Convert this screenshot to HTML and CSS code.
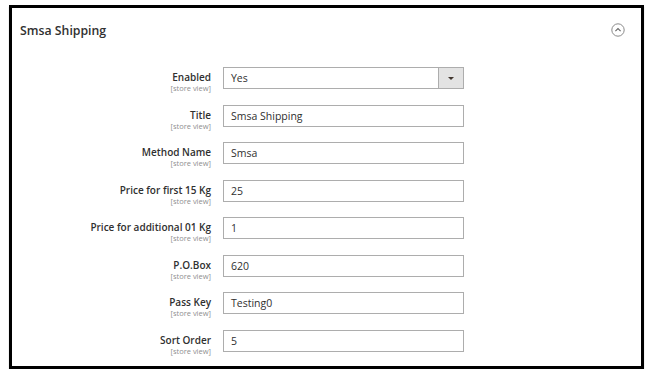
FILE: index.html
```html
<!DOCTYPE html>
<html lang="en">
<head>
  <meta charset="UTF-8" />
  <title>Smsa Shipping</title>
  <link rel="stylesheet" href="styles.css">
</head>
<body>
  <div class="section">
    <div class="section-head">
      <span class="section-title">Smsa Shipping</span>
      <span class="toggle">
        <svg width="14" height="14" viewBox="0 0 14 14">
          <circle cx="7" cy="7" r="6.2" fill="none" stroke="#8a8a8a" stroke-width="1"/>
          <path d="M4.4 8.2 L7 5.6 L9.6 8.2" fill="none" stroke="#666" stroke-width="1.1"/>
        </svg>
      </span>
    </div>

    <div class="form">
      <div class="field">
        <div class="label">Enabled<span class="scope">[store view]</span></div>
        <div class="control select">
          <span>Yes</span>
          <span class="select-btn"><span class="caret"></span></span>
        </div>
      </div>
      <div class="field">
        <div class="label">Title<span class="scope">[store view]</span></div>
        <div class="control">Smsa Shipping</div>
      </div>
      <div class="field">
        <div class="label">Method Name<span class="scope">[store view]</span></div>
        <div class="control">Smsa</div>
      </div>
      <div class="field">
        <div class="label">Price for first 15 Kg<span class="scope">[store view]</span></div>
        <div class="control">25</div>
      </div>
      <div class="field">
        <div class="label">Price for additional 01 Kg<span class="scope">[store view]</span></div>
        <div class="control">1</div>
      </div>
      <div class="field">
        <div class="label">P.O.Box<span class="scope">[store view]</span></div>
        <div class="control">620</div>
      </div>
      <div class="field">
        <div class="label">Pass Key<span class="scope">[store view]</span></div>
        <div class="control">Testing0</div>
      </div>
      <div class="field">
        <div class="label">Sort Order<span class="scope">[store view]</span></div>
        <div class="control">5</div>
      </div>
    </div>
  </div>
</body>
</html>
```

FILE: styles.css
```css
body {
  margin: 0;
  background: #fff;
  font-family: "Open Sans", Arial, sans-serif;
  color: #303030;
}

.section {
  margin: 5px 3px 0 9px;
  height: 358px;
  border: 3px solid #000;
  box-shadow: 0 2px 1px #b8b8b8;
}

.section-head {
  display: flex;
  justify-content: space-between;
  align-items: center;
  height: 44px;
  padding: 0 16px 0 8px;
}

.section-title {
  font-size: 12.3px;
  font-weight: 600;
  color: #303030;
}

.toggle {
  display: flex;
}

.form {
  display: flex;
  flex-direction: column;
  gap: 15.57px;
  padding-top: 15px;
}

.field {
  display: flex;
  gap: 12px;
  height: 22px;
}

.label {
  width: 199px;
  text-align: right;
  font-size: 10px;
  font-weight: 600;
  line-height: 11px;
  padding-top: 5px;
}

.scope {
  display: block;
  margin-top: 1px;
  font-size: 7.5px;
  font-weight: 400;
  line-height: 9px;
  color: #8f8f8f;
}

.control {
  box-sizing: border-box;
  width: 241px;
  height: 22px;
  border: 1px solid #adadad;
  padding: 0 7px;
  font-size: 10.5px;
  line-height: 20px;
  color: #303030;
}

.select {
  display: flex;
  justify-content: space-between;
  padding-right: 0;
}

.select-btn {
  display: flex;
  align-items: center;
  justify-content: center;
  width: 24px;
  background: #e3e3e3;
  border-left: 1px solid #adadad;
}

.caret {
  width: 0;
  height: 0;
  border-left: 3px solid transparent;
  border-right: 3px solid transparent;
  border-top: 3px solid #41362f;
}
```
